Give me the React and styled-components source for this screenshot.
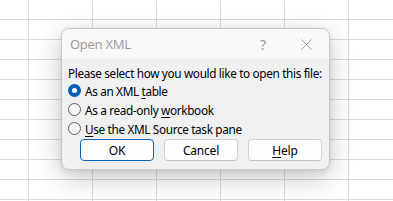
import React from "react";
import styled, { createGlobalStyle } from "styled-components";

const Global = createGlobalStyle`
  html, body { margin: 0; padding: 0; background: #fff; overflow: hidden; }
  body { font-family: "Noto Sans", "Open Sans", sans-serif; }
`;

const Sheet = styled.div`
  position: relative;
  width: 393px;
  height: 201px;
  background-color: #fff;
  background-image:
    linear-gradient(to right, #dcdcdc 1px, transparent 1px),
    linear-gradient(to bottom, #dcdcdc 1px, transparent 1px);
  background-size: 64px 20px;
  background-position: 28px 19px;
`;

const Dialog = styled.div`
  position: absolute;
  left: 61px;
  top: 28px;
  width: 269px;
  box-sizing: border-box;
  border: 1px solid #c9c9c9;
  border-radius: 8px;
  overflow: hidden;
  background: #f0f0f0;
  box-shadow: 0 8px 28px rgba(0, 0, 0, 0.22), 0 2px 6px rgba(0, 0, 0, 0.08);
  display: flex;
  flex-direction: column;
`;

const TitleBar = styled.div`
  height: 30px;
  display: flex;
  align-items: center;
  background: #f9f9f9;
  padding-left: 8px;
`;

const Title = styled.div`
  flex: 1;
  font-size: 13px;
  letter-spacing: -0.3px;
  color: #9b9b9b;
  margin-top: -1px;
`;

const TitleButton = styled.div`
  width: ${(p) => p.$w}px;
  height: 30px;
  display: flex;
  align-items: center;
  justify-content: center;
  color: #9b9b9b;
  font-size: 14px;
`;

const Body = styled.div`
  padding: 6px 7px 8px 6px;
  display: flex;
  flex-direction: column;
  font-size: 11.8px;
  letter-spacing: -0.36px;
  white-space: nowrap;
  color: #000;
`;

const Prompt = styled.div`
  line-height: 16px;
`;

const Options = styled.div`
  display: flex;
  flex-direction: column;
`;

const Option = styled.label`
  height: 19px;
  display: flex;
  align-items: center;
  gap: 4px;
`;

const Radio = styled.span`
  width: 13px;
  height: 13px;
  flex: none;
  box-sizing: border-box;
  border-radius: 50%;
  border: ${(p) => (p.$on ? "none" : "1px solid #5f5f5f")};
  background: ${(p) => (p.$on ? "#005fb8" : "#f5f5f5")};
  display: flex;
  align-items: center;
  justify-content: center;
  &::after {
    content: "";
    display: ${(p) => (p.$on ? "block" : "none")};
    width: 5px;
    height: 5px;
    border-radius: 50%;
    background: #fff;
  }
`;

const U = styled.span`
  text-decoration: underline;
  text-underline-offset: 2px;
`;

const Buttons = styled.div`
  display: flex;
  justify-content: flex-end;
  gap: 10px;
  margin-top: 1px;
`;

const Button = styled.div`
  width: 74px;
  height: 22px;
  box-sizing: border-box;
  border-radius: 4px;
  background: #fdfdfd;
  border: 1px solid ${(p) => (p.$primary ? "#0067c0" : "#d3d3d3")};
  border-bottom-color: ${(p) => (p.$primary ? "#0067c0" : "#c2c2c2")};
  display: flex;
  align-items: center;
  justify-content: center;
  font-size: 12px;
  letter-spacing: -0.2px;
`;

export default function App() {
  return (
    <>
      <Global />
      <Sheet>
        <Dialog>
          <TitleBar>
            <Title>Open XML</Title>
            <TitleButton $w={40}>?</TitleButton>
            <TitleButton $w={46}>
              <svg width="11" height="11" viewBox="0 0 11 11">
                <path d="M0.5 0.5 L10.5 10.5 M10.5 0.5 L0.5 10.5" stroke="#9b9b9b" strokeWidth="1" fill="none" />
              </svg>
            </TitleButton>
          </TitleBar>
          <Body>
            <Prompt>Please select how you would like to open this file:</Prompt>
            <Options>
              <Option><Radio $on /><span>As an XML <U>t</U>able</span></Option>
              <Option><Radio /><span>As a read-only <U>w</U>orkbook</span></Option>
              <Option><Radio /><span><U>U</U>se the XML Source task pane</span></Option>
            </Options>
            <Buttons>
              <Button $primary>OK</Button>
              <Button>Cancel</Button>
              <Button><span><U>H</U>elp</span></Button>
            </Buttons>
          </Body>
        </Dialog>
      </Sheet>
    </>
  );
}
